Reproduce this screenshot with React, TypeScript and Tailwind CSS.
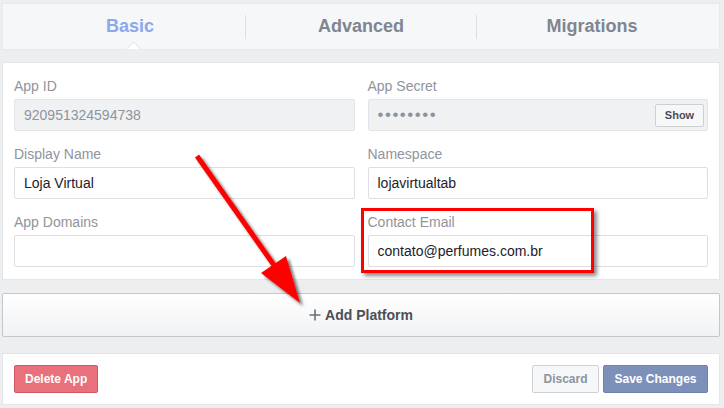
import type { ReactNode } from "react";

function Label({ children }: { children: ReactNode }) {
  return (
    <div className="h-[18px] text-[14px] leading-[18px] text-[#90949c] mb-1">
      {children}
    </div>
  );
}

function Field({
  label,
  value,
  disabled = false,
  children,
}: {
  label: string;
  value?: ReactNode;
  disabled?: boolean;
  children?: ReactNode;
}) {
  return (
    <div>
      <Label>{label}</Label>
      <div
        className={
          disabled
            ? "h-8 flex items-center justify-between pl-[9px] pr-[3px] border border-[#e3e4e7] bg-[#f0f1f3] rounded-[2px] text-[14px] text-[#8d949e]"
            : "h-8 flex items-center justify-between pl-[9px] pr-[3px] border border-[#dddfe2] bg-white rounded-[2px] text-[14px] text-[#1d2129]"
        }
      >
        <span className="truncate">{value}</span>
        {children}
      </div>
    </div>
  );
}

function Tab({ label, active = false }: { label: string; active?: boolean }) {
  return (
    <div
      className={
        active
          ? "flex-1 text-center text-[18px] font-bold text-[#8ca7ee]"
          : "flex-1 text-center text-[18px] font-bold text-[#7f8591]"
      }
    >
      {label}
    </div>
  );
}

export default function App() {
  return (
    <div className="relative min-h-screen w-full bg-[#edeef0] pt-[3px] pl-[2px] pr-[4px] font-['Liberation_Sans',Arial,sans-serif]">
      {/* tabs */}
      <div className="relative flex h-[47px] items-center px-3 bg-[#f6f7f9] border border-[#e8e9ec]">
        <Tab label="Basic" active />
        <div className="w-px h-6 bg-[#dddfe2]" />
        <Tab label="Advanced" />
        <div className="w-px h-6 bg-[#dddfe2]" />
        <Tab label="Migrations" />
        <svg
          className="absolute left-[122px] bottom-[-1px]"
          width="17"
          height="9"
          viewBox="0 0 17 9"
        >
          <polygon points="0.5,9 8.5,1 16.5,9" fill="#ffffff" stroke="#dddfe2" />
          <rect x="0" y="8" width="17" height="1" fill="#edeef0" />
        </svg>
      </div>

      {/* main settings */}
      <div className="mt-3 bg-white border border-[#e5e6e9] px-[11px] pt-[14px] pb-3 grid grid-cols-2 gap-x-[13px] gap-y-[14px]">
        <Field label="App ID" value="920951324594738" disabled />
        <Field
          label="App Secret"
          disabled
          value={
            <span className="text-[17px] leading-none tracking-[1.5px] text-[#8d949e]">
              ••••••••
            </span>
          }
        >
          <button className="h-[23px] w-[49px] rounded-[2px] border border-[#ced0d4] bg-[#f6f7f9] text-[11px] font-bold text-[#4b4f56]">
            Show
          </button>
        </Field>
        <Field label="Display Name" value="Loja Virtual" />
        <Field label="Namespace" value="lojavirtualtab" />
        <Field label="App Domains" value="" />
        <Field label="Contact Email" value="contato@perfumes.com.br" />
      </div>

      {/* add platform */}
      <button className="mt-[13px] w-full h-[44px] flex items-center justify-center gap-[4px] border border-[#c4c7cc] rounded-[2px] bg-gradient-to-b from-white to-[#f1f2f4] text-[14px] font-bold text-[#4b4f56]">
        <svg width="12" height="12" viewBox="0 0 12 12">
          <path d="M6 0.5v11M0.5 6h11" stroke="#6b6f76" strokeWidth="1.6" />
        </svg>
        Add Platform
      </button>

      {/* footer */}
      <div className="mt-4 h-[52px] bg-white border border-[#e5e6e9] px-[11px] flex items-center justify-between">
        <button className="h-7 px-[10px] rounded-[2px] border border-[#cf5a63] bg-[#e8717b] text-[12px] font-bold text-white">
          Delete App
        </button>
        <div className="flex gap-[4px]">
          <button className="h-7 w-[67px] rounded-[2px] border border-[#ced0d4] bg-[#f6f7f9] text-[12px] font-bold text-[#8d949e]">
            Discard
          </button>
          <button className="h-7 w-[105px] rounded-[2px] border border-[#6f82ad] bg-[#7d90ba] text-[12px] font-bold text-white">
            Save Changes
          </button>
        </div>
      </div>

      {/* annotation: red box */}
      <div className="absolute left-[361px] top-[208px] w-[233px] h-[65px] border-[3px] border-[#ff0000] shadow-[3px_3px_4px_rgba(0,0,0,0.45)] pointer-events-none" />

      {/* annotation: red arrow */}
      <svg
        className="absolute left-0 top-0 pointer-events-none"
        width="724"
        height="408"
        viewBox="0 0 724 408"
      >
        <defs>
          <filter id="sh" x="-20%" y="-20%" width="140%" height="140%">
            <feDropShadow dx="3" dy="3" stdDeviation="1.6" floodColor="#000" floodOpacity="0.55" />
          </filter>
        </defs>
        <g filter="url(#sh)">
          <line x1="197" y1="156" x2="276" y2="268" stroke="#ff0000" strokeWidth="5" />
          <polygon points="300,303 261,273 286,256" fill="#ff0000" />
        </g>
      </svg>
    </div>
  );
}
